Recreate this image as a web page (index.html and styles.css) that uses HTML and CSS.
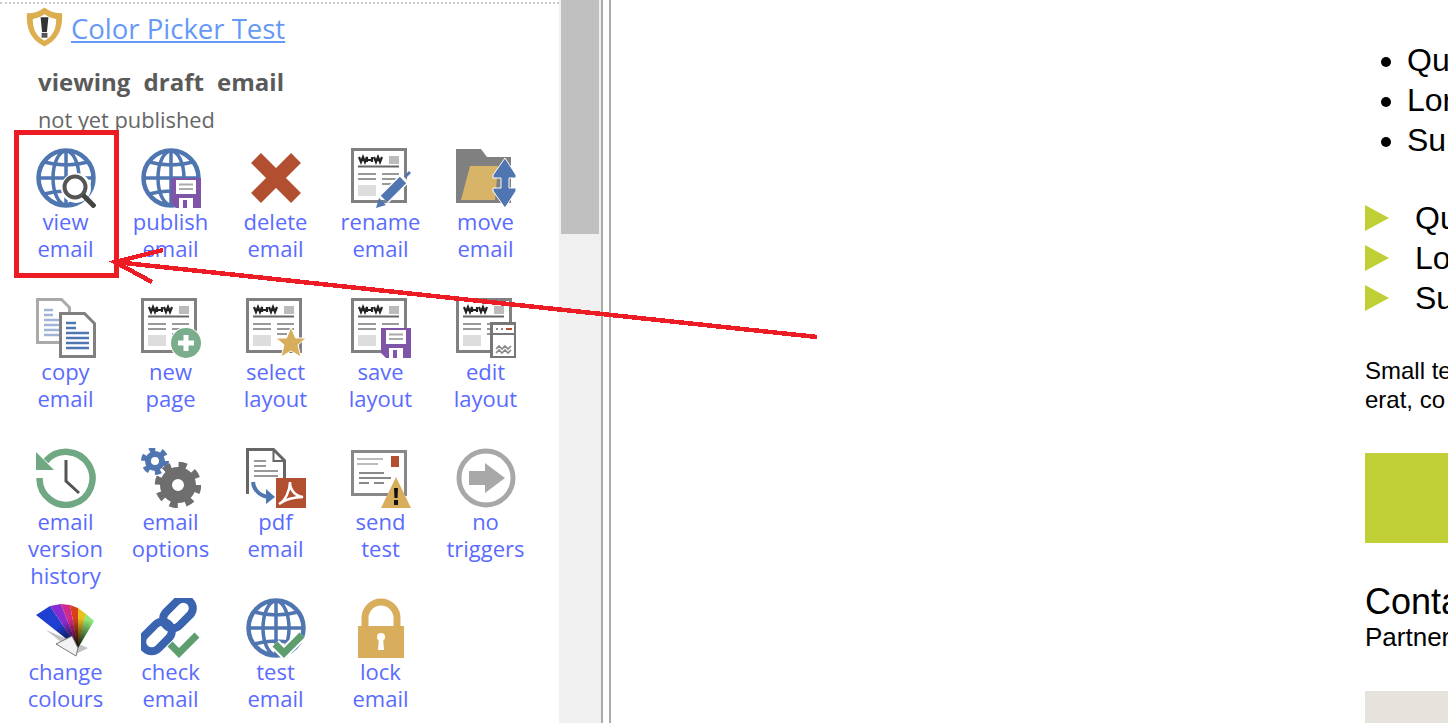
FILE: index.html
```html
<!DOCTYPE html>
<html lang="en">
<head>
  <meta charset="UTF-8" />
  <title>Color Picker Test</title>
  <link rel="stylesheet" href="styles.css">
</head>
<body>

  <!-- shared icon parts -->
  <svg class="defs" width="0" height="0">
    <defs>
      <symbol id="doc" viewBox="0 0 60 60">
        <rect x="1.500" y="1.500" width="53" height="52" fill="#fff" stroke="#808080" stroke-width="3"/>
        <path d="M8 9l2 5 2-5 2 5 2-5v5m0-2h5m0-3v5m2-5l2 5 2-5 2 5 2-5" fill="none" stroke="#222" stroke-width="2.200"/>
        <rect x="38" y="8" width="10" height="8" fill="#bbb"/>
        <path d="M7 18.500h41" stroke="#666" stroke-width="2"/>
        <path d="M7 26h18M7 31h18M31 26h17M31 31h17M31 36h10" stroke="#999" stroke-width="2"/>
        <rect x="7" y="37" width="18" height="11" fill="#ddd"/>
      </symbol>
      <symbol id="globe" viewBox="0 0 60 60">
        <g fill="none" stroke="#4f76b0">
          <circle cx="30" cy="30" r="27.500" stroke-width="4.500"/>
          <ellipse cx="30" cy="30" rx="13" ry="27" stroke-width="3.500"/>
          <path d="M30 3v54M3 30h54M8 14q22 6 44 0M8 46q22-6 44 0" stroke-width="3.500"/>
        </g>
      </symbol>
      <symbol id="floppy" viewBox="0 0 30 30">
        <path d="M0 0h30v30H5l-5-5z" fill="#7f55a8"/>
        <rect x="5" y="2" width="20" height="14" fill="#fff"/>
        <path d="M8 6.500h14M8 11h14" stroke="#aaa" stroke-width="2"/>
        <rect x="8" y="20" width="14" height="10" fill="#fff"/>
        <rect x="12" y="22" width="4" height="8" fill="#7f55a8"/>
      </symbol>
      <symbol id="tick" viewBox="0 0 60 60">
        <path d="M29 46l9 9 18-18" fill="none" stroke="#fff" stroke-width="11"/>
        <path d="M29 46l9 9 18-18" fill="none" stroke="#5e9e6e" stroke-width="7"/>
      </symbol>
      <radialGradient id="fanShade" gradientUnits="userSpaceOnUse" cx="42" cy="50" r="30">
        <stop offset="0" stop-color="#000" stop-opacity=".95"/>
        <stop offset=".6" stop-color="#000" stop-opacity=".4"/>
        <stop offset="1" stop-color="#000" stop-opacity="0"/>
      </radialGradient>
    </defs>
  </svg>

  <div class="sidebar">
    <div class="title">
      <svg class="shield" viewBox="0 0 40 40">
        <path d="M20 0c5 4 11 6 18 6 1 14-3 27-18 34C5 33 1 20 2 6c7 0 13-2 18-6z" fill="#dcae50"/>
        <path d="M20 7c4 3 8 4 12 5 0 10-3 17-12 22C11 29 8 22 8 12c4-1 8-2 12-5z" fill="#fff"/>
        <path d="M16 10h8l-1.500 15h-5z" fill="#333"/>
        <rect x="17" y="26" width="6" height="5" fill="#555"/>
      </svg>
      <a class="title-link" href="#">Color Picker Test</a>
    </div>
    <div class="status">viewing draft email</div>
    <div class="substatus">not yet published</div>

    <div class="actions">
      <a class="action" href="#">
        <svg class="icon" viewBox="0 0 60 60">
          <use href="#globe" width="60" height="60"/>
          <circle cx="40" cy="40" r="15" fill="#fff"/>
          <circle cx="39" cy="39" r="10.500" fill="#fff" stroke="#555" stroke-width="4"/>
          <path d="M47 47l12 12" stroke="#444" stroke-width="5"/>
        </svg>
        view<br>email
      </a>
      <a class="action" href="#">
        <svg class="icon" viewBox="0 0 60 60">
          <use href="#globe" width="60" height="60"/>
          <use href="#floppy" x="30" y="30" width="30" height="30"/>
        </svg>
        publish<br>email
      </a>
      <a class="action" href="#">
        <svg class="icon" viewBox="0 0 60 60">
          <path d="M10 10l40 40M50 10L10 50" stroke="#b14f30" stroke-width="14"/>
        </svg>
        delete<br>email
      </a>
      <a class="action" href="#">
        <svg class="icon" viewBox="0 0 60 60">
          <use href="#doc" width="60" height="60"/>
          <path d="M33 51l21-21" stroke="#fff" stroke-width="12"/>
          <path d="M33 51l19-19" stroke="#4f76b0" stroke-width="9"/>
          <path d="M53 28l5-5 2 2-5 5z" fill="#4f76b0"/>
          <path d="M25 60l3-10 7 7z" fill="#4f76b0"/>
        </svg>
        rename<br>email
      </a>
      <a class="action" href="#">
        <svg class="icon" viewBox="0 0 60 60">
          <path d="M0 1h25l6 8h24v46H0z" fill="#808080"/>
          <path d="M14 18h28l-3 34H5z" fill="#d8b469"/>
          <path d="M49 10l11 17v3l-7 0v10l7 0v3L49 60 37 43v-3l8 0V30l-8 0v-3z" fill="#4f76b0" stroke="#fff" stroke-width="1"/>
        </svg>
        move<br>email
      </a>

      <a class="action" href="#">
        <svg class="icon" viewBox="0 0 60 60">
          <path d="M1.500 1.500h24l8 8v35h-32z" fill="#fff" stroke="#aaa" stroke-width="3"/>
          <path d="M8 12h9M8 17h9M8 22h18M8 27h18M8 32h18M8 37h18" stroke="#9fb5d6" stroke-width="2.500"/>
          <path d="M24.500 15.500h24l10 10v33h-34z" fill="#fff" stroke="#808080" stroke-width="3"/>
          <path d="M30 25h10M30 30h10M30 35h23M30 40h23M30 45h23M30 50h23" stroke="#4f76b0" stroke-width="2.500"/>
        </svg>
        copy<br>email
      </a>
      <a class="action" href="#">
        <svg class="icon" viewBox="0 0 60 60">
          <use href="#doc" width="60" height="60"/>
          <circle cx="45" cy="45" r="16" fill="#fff"/>
          <circle cx="45" cy="45" r="15" fill="#7aad8b"/>
          <path d="M45 37v16M37 45h16" stroke="#fff" stroke-width="5"/>
        </svg>
        new<br>page
      </a>
      <a class="action" href="#">
        <svg class="icon" viewBox="0 0 60 60">
          <use href="#doc" width="60" height="60"/>
          <path d="M45 29l4.500 11H60l-8 7 3 12-10-6-10 6 3-12-8-7h10.500z" fill="#d8ae5c" stroke="#fff" stroke-width="1"/>
        </svg>
        select<br>layout
      </a>
      <a class="action" href="#">
        <svg class="icon" viewBox="0 0 60 60">
          <use href="#doc" width="60" height="60"/>
          <use href="#floppy" x="30" y="30" width="30" height="30"/>
        </svg>
        save<br>layout
      </a>
      <a class="action" href="#">
        <svg class="icon" viewBox="0 0 60 60">
          <use href="#doc" width="60" height="60"/>
          <rect x="35.500" y="25.500" width="24" height="34" fill="#fff" stroke="#777" stroke-width="3"/>
          <path d="M36 36h23" stroke="#777" stroke-width="2"/>
          <path d="M40 31h2M45 31h2" stroke="#888" stroke-width="2"/>
          <path d="M50 31h6" stroke="#b14f30" stroke-width="2"/>
          <path d="M40 51l3-3 3 3 3-3 3 3 3-3M40 55l3-3 3 3 3-3 3 3 3-3" fill="none" stroke="#888" stroke-width="1.600"/>
        </svg>
        edit<br>layout
      </a>

      <a class="action" href="#">
        <svg class="icon" viewBox="0 0 60 60">
          <path d="M10 13A26.500 26.500 0 1 1 3.500 30" fill="none" stroke="#6fa883" stroke-width="6.500"/>
          <path d="M0 4v18h18z" fill="#6fa883"/>
          <path d="M30 12v21l13 12" fill="none" stroke="#555" stroke-width="3"/>
        </svg>
        email<br>version<br>history
      </a>
      <a class="action" href="#">
        <svg class="icon" viewBox="0 0 60 60">
          <g fill="none">
            <circle cx="14" cy="13" r="7" stroke="#4f76b0" stroke-width="6"/>
            <circle cx="14" cy="13" r="11.500" stroke="#4f76b0" stroke-width="5" stroke-dasharray="6 6.040"/>
            <circle cx="37" cy="37" r="12" stroke="#6e6e6e" stroke-width="12"/>
            <circle cx="37" cy="37" r="20" stroke="#6e6e6e" stroke-width="6.500" stroke-dasharray="8 7.700"/>
          </g>
        </svg>
        email<br>options
      </a>
      <a class="action" href="#">
        <svg class="icon" viewBox="0 0 60 60">
          <path d="M1.500 46V1.500h26l11 11V32" fill="#fff" stroke="#666" stroke-width="3"/>
          <path d="M27.500 2v11h11" fill="none" stroke="#666" stroke-width="2"/>
          <path d="M8 13h12M8 18h12M8 23h24M8 28h24" stroke="#999" stroke-width="2"/>
          <path d="M7 34c1 10 9 15 18 15" fill="none" stroke="#4f76b0" stroke-width="4"/>
          <path d="M20 41l9 8-9 7z" fill="#4f76b0"/>
          <rect x="30" y="30" width="30" height="30" fill="#b14f30"/>
          <path d="M33 56c6-3 11-13 11-22 0 8 5 14 13 15-9 0-17 2-24 7z" fill="none" stroke="#fff" stroke-width="2.500"/>
        </svg>
        pdf<br>email
      </a>
      <a class="action" href="#">
        <svg class="icon" viewBox="0 0 60 60">
          <rect x="1.500" y="3.500" width="53" height="43" fill="#fff" stroke="#888" stroke-width="3"/>
          <path d="M6 11h26M6 16h21" stroke="#bbb" stroke-width="2"/>
          <rect x="40" y="8" width="8" height="11" fill="#b14f30"/>
          <path d="M8 25h25M8 30h32" stroke="#888" stroke-width="2"/>
          <path d="M8 35h10M23 35h10" stroke="#888" stroke-width="2"/>
          <path d="M45 29l15 31H30z" fill="#d8ae5c"/>
          <path d="M43 40h4l-.5 10h-3z" fill="#111"/>
          <rect x="43" y="52" width="4" height="5" fill="#111"/>
        </svg>
        send<br>test
      </a>
      <a class="action" href="#">
        <svg class="icon" viewBox="0 0 60 60">
          <circle cx="30" cy="30" r="27" fill="#fff" stroke="#a8a8a8" stroke-width="5"/>
          <path d="M13 23h16v-8l20 15-20 15v-8H13z" fill="#a8a8a8"/>
        </svg>
        no<br>triggers
      </a>

      <a class="action" href="#">
        <svg class="icon" viewBox="0 0 60 60">
          <path d="M10 32l30 24 12-6z" fill="#999" opacity=".6"/>
          <path d="M42 50L0 17 14 8z" fill="#1f3fd0"/>
          <path d="M42 50L14 8l11-2z" fill="#8a2bd0"/>
          <path d="M42 50L25 6l9 1z" fill="#d02a8a"/>
          <path d="M42 50L34 7l8 3z" fill="#d8401c"/>
          <path d="M42 50l0-40 8 6z" fill="#e8c020"/>
          <path d="M42 50l8-34 8 7z" fill="#8ee878"/>
          <path d="M42 50L0 17 14 8l11-2 9 1 8 3 8 6 8 7z" fill="url(#fanShade)"/>
          <path d="M20 46l16-8 6 12-2 8z" fill="#f2f2f2" stroke="#777" stroke-width="1"/>
        </svg>
        change<br>colours
      </a>
      <a class="action" href="#">
        <svg class="icon" viewBox="0 0 60 60">
          <g fill="none" stroke="#3a64b0" stroke-width="8">
            <rect x="20" y="6" width="34" height="19" rx="9.500" transform="rotate(-45 37 15.500)"/>
            <rect x="-1" y="29" width="34" height="19" rx="9.500" transform="rotate(-45 16 38.500)"/>
          </g>
          <use href="#tick" width="60" height="60"/>
        </svg>
        check<br>email
      </a>
      <a class="action" href="#">
        <svg class="icon" viewBox="0 0 60 60">
          <use href="#globe" width="60" height="60"/>
          <use href="#tick" width="60" height="60"/>
        </svg>
        test<br>email
      </a>
      <a class="action" href="#">
        <svg class="icon" viewBox="0 0 60 60">
          <path d="M14 30V20a16 16 0 0 1 32 0v10" fill="none" stroke="#d8ae5c" stroke-width="7"/>
          <rect x="7" y="28" width="46" height="32" fill="#d8ae5c"/>
          <circle cx="30" cy="39" r="4" fill="#fff"/>
          <path d="M28 40h4l1 12h-6z" fill="#fff"/>
        </svg>
        lock<br>email
      </a>
    </div>
  </div>

  <div class="scrollbar"><div class="thumb"></div></div>
  <div class="gutter"></div>

  <div class="preview">
    <ul class="bullets">
      <li>Quisque</li>
      <li>Lorem</li>
      <li>Subscribe</li>
    </ul>
    <ul class="arrows">
      <li>Quisque</li>
      <li>Lorem</li>
      <li>Subscribe</li>
    </ul>
    <p class="small">Small text<br>erat, co</p>
    <div class="banner"></div>
    <h2 class="contact">Contact</h2>
    <p class="partner">Partner</p>
    <div class="footer-box"></div>
  </div>

  <!-- red annotation on top of the screenshot -->
  <svg class="markup" width="1448" height="723" viewBox="0 0 1448 723">
    <rect x="16" y="132.500" width="100" height="142.500" fill="none" stroke="#ed1c24" stroke-width="5" shape-rendering="crispEdges"/>
    <path d="M817 337L115 262M163 250L115 262L152 282" fill="none" stroke="#ed1c24" stroke-width="4.500" shape-rendering="crispEdges"/>
  </svg>

</body>
</html>
```

FILE: styles.css
```css
html, body {
  height: 100%;
}

body {
  margin: 0;
  display: flex;
  height: 723px;
  overflow: hidden;
  background: #fff;
  font-family: 'Open Sans', sans-serif;
  position: relative;
}

.defs {
  position: absolute;
}

.sidebar {
  width: 559px;
  flex: none;
  box-sizing: border-box;
  overflow: hidden;
  margin-top: 2px;
  border-top: 2px dotted #ccc;
  padding-top: 3px;
}

.title {
  display: flex;
  align-items: center;
  gap: 7px;
  padding-left: 25px;
  height: 40px;
}

.shield {
  width: 39px;
  height: 40px;
  flex: none;
  filter: blur(0.5px);
}

.title-link {
  margin-top: 2px;
  font-size: 27.5px;
  color: #6699f5;
}

.status {
  margin-top: 19px;
  padding-left: 38px;
  font-size: 24px;
  line-height: 32px;
  font-weight: 700;
  word-spacing: 7px;
  color: #5a5a5a;
}

.substatus {
  margin-top: 7px;
  padding-left: 38px;
  font-size: 21.8px;
  line-height: 30px;
  color: #666;
}

.actions {
  display: grid;
  grid-template-columns: repeat(5, 105px);
  grid-auto-rows: 150px;
  margin-top: 13px;
  padding-left: 13px;
}

.action {
  display: block;
  text-align: center;
  font-size: 22px;
  line-height: 27px;
  color: #5a6bff;
  text-decoration: none;
}

.icon {
  display: block;
  width: 60px;
  height: 60px;
  margin: 0 auto;
  filter: blur(0.4px);
}

.scrollbar {
  width: 42px;
  flex: none;
  box-sizing: border-box;
  padding: 0 2px;
  background: #f0f0f0;
}

.thumb {
  height: 234px;
  background: #c0c0c0;
}

.gutter {
  width: 6px;
  flex: none;
  border-left: 2px solid #aaa;
  border-right: 2px solid #aaa;
}

.preview {
  flex: 1;
  min-width: 0;
  overflow: hidden;
  padding-left: 754px;
  padding-top: 40px;
  white-space: nowrap;
  font-family: 'Liberation Sans', sans-serif;
  color: #000;
}

.bullets {
  margin: 0;
  padding-left: 42px;
  font-size: 32px;
  line-height: 40px;
}

.arrows {
  list-style: none;
  margin: 38px 0 0;
  padding: 0;
  font-size: 32px;
  line-height: 40px;
}

.arrows li {
  display: flex;
  align-items: center;
  gap: 26px;
}

.arrows li::before {
  content: "";
  border-left: 24px solid #bfcf35;
  border-top: 13px solid transparent;
  border-bottom: 13px solid transparent;
}

.small {
  margin: 38px 0 0;
  font-size: 24px;
  line-height: 29px;
}

.banner {
  height: 90px;
  margin-top: 39px;
  background: #bfcf35;
}

.contact {
  margin: 37px 0 0;
  font-size: 36px;
  font-weight: 400;
  line-height: 44px;
}

.partner {
  margin: 0;
  font-size: 26px;
  line-height: 27px;
}

.footer-box {
  height: 60px;
  margin-top: 40px;
  background: #e6e3dd;
}

.markup {
  position: absolute;
  left: 0;
  top: 0;
  pointer-events: none;
}
```
